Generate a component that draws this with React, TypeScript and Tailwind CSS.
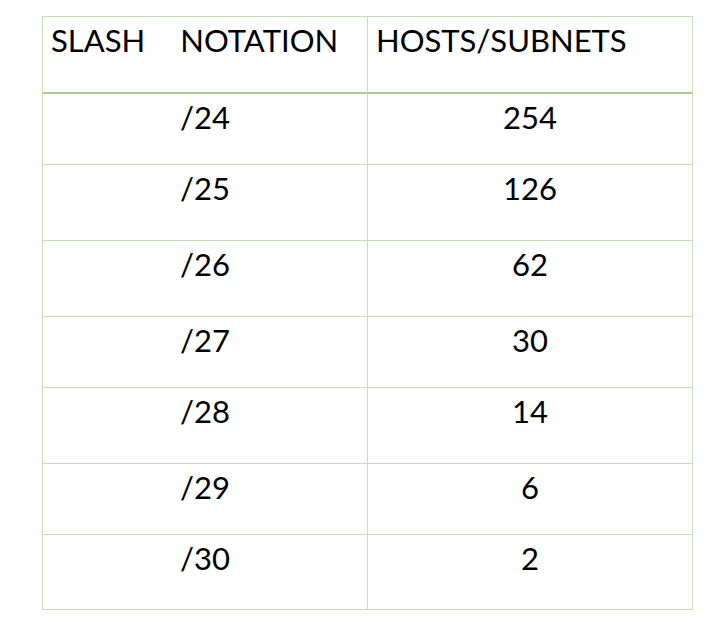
import React from 'react';

interface SubnetRow {
  slash: string;
  hosts: string;
  height: string;
}

// row heights follow the reference (incl. 1px bottom rule)
const rows: SubnetRow[] = [
  { slash: '/24', hosts: '254', height: 'h-[71px]' },
  { slash: '/25', hosts: '126', height: 'h-[76px]' },
  { slash: '/26', hosts: '62', height: 'h-[76px]' },
  { slash: '/27', hosts: '30', height: 'h-[71px]' },
  { slash: '/28', hosts: '14', height: 'h-[76px]' },
  { slash: '/29', hosts: '6', height: 'h-[71px]' },
  { slash: '/30', hosts: '2', height: 'h-[75px]' },
];

const cell = 'border-r border-b border-[#c5e0b3] pt-[8px] leading-[31px]';

export default function App() {
  return (
    <div className="min-h-[628px] w-[706px] bg-white pt-[16px] pl-[42px] text-black font-['Lato','Liberation_Sans',sans-serif] text-[31px]">
      <div className="grid w-[651px] grid-cols-[325px_325px] border-t border-l border-[#c5e0b3]">
        <div className="h-[77px] border-r border-b-2 border-r-[#c5e0b3] border-b-[#a8d08d] pt-[8px] pl-[8px] leading-[31px] whitespace-nowrap">
          <span>SLASH</span>
          <span className="ml-[35px]">NOTATION</span>
        </div>
        <div className="h-[77px] border-r border-b-2 border-r-[#c5e0b3] border-b-[#a8d08d] pt-[8px] pl-[8px] leading-[31px] whitespace-nowrap">
          HOSTS/SUBNETS
        </div>

        {rows.map((row) => (
          <React.Fragment key={row.slash}>
            <div className={`${cell} ${row.height} text-center`}>{row.slash}</div>
            <div className={`${cell} ${row.height} text-center`}>{row.hosts}</div>
          </React.Fragment>
        ))}
      </div>
    </div>
  );
}
